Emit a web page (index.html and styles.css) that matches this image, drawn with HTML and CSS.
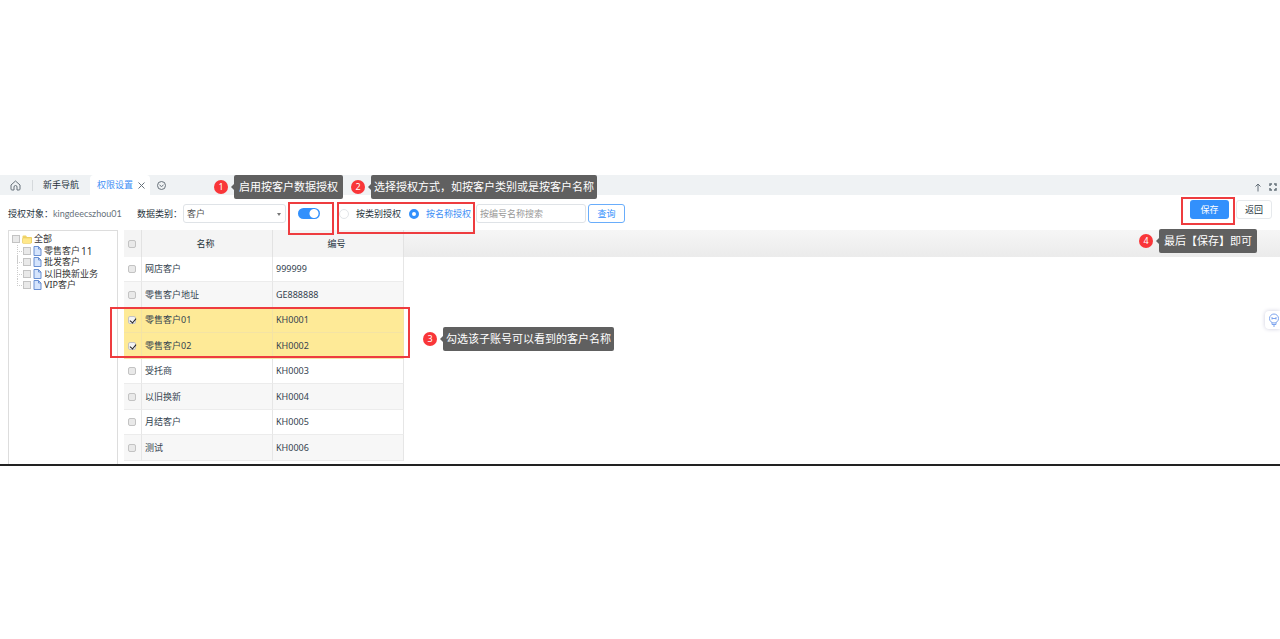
FILE: index.html
```html
<!DOCTYPE html>
<html lang="zh-CN">
<head>
<meta charset="utf-8">
<title>权限设置</title>
<link rel="stylesheet" href="styles.css">
</head>
<body>
<main class="page">
  <nav class="tabs">
    <a class="home" href="#" aria-label="首页"><svg width="11" height="11" viewBox="0 0 22 22"><path d="M2 10 11 2l9 8v8q0 2-2 2h-4v-6q0-3-3-3t-3 3v6H4q-2 0-2-2z"/></svg></a>
    <a class="tab" href="#">新手导航</a>
    <span class="tab active"><a href="#">权限设置</a><button class="close" type="button" aria-label="关闭"><svg width="7" height="7" viewBox="0 0 14 14"><path d="m1 1 12 12M13 1 1 13"/></svg></button></span>
    <button class="tab-menu" type="button" aria-label="更多"><svg width="9" height="9" viewBox="0 0 18 18"><circle cx="9" cy="9" r="8"/><path d="m5 8 4 3 4-3"/></svg></button>
    <div class="window-tools">
      <button type="button" aria-label="收起"><svg width="8" height="9" viewBox="0 0 16 18"><path d="M8 17V2M3 7l5-5 5 5"/></svg></button>
      <button type="button" aria-label="全屏"><svg width="8" height="8" viewBox="0 0 16 16"><path class="bold" d="M2 6V2h4M10 2h4v4M14 10v4h-4M6 14H2v-4"/></svg></button>
    </div>
  </nav>

  <form class="toolbar">
    <span class="caption">授权对象：</span>
    <span class="account">kingdeecszhou01</span>
    <label class="caption" for="kind">数据类别：</label>
    <span class="select"><select id="kind"><option>客户</option></select></span>
    <input class="switch" type="checkbox" checked aria-label="启用数据授权">
    <label class="radio"><input type="radio" name="mode">按类别授权</label>
    <label class="radio second"><input type="radio" name="mode" checked><span>按名称授权</span></label>
    <input class="search" type="text" placeholder="按编号名称搜索" aria-label="搜索">
    <button class="btn query" type="button">查询</button>
    <div class="actions">
      <button class="btn save" type="button">保存</button>
      <button class="btn back" type="button">返回</button>
    </div>
  </form>

  <div class="content">
    <aside class="tree">
      <label class="node root"><input class="check" type="checkbox"><svg width="10" height="9" viewBox="0 0 20 18"><path fill="#f0d468" stroke="none" d="M1 3q0-2 2-2h5l2 3h8q2 0 2 2v10H1z"/><path fill="#ffe88a" stroke="#e5c75a" stroke-width="1" d="M1 8q0-2 2-2h16v8q0 3-3 3H3q-2 0-2-2z"/></svg>全部</label>
      <label class="node"><input class="check" type="checkbox"><svg width="9" height="10" viewBox="0 0 18 20"><path class="doc" d="M2 1h9l5 5v13H2z"/><path class="fold" d="M11 1v5h5"/></svg>零售客户<span class="latin">11</span></label>
      <label class="node"><input class="check" type="checkbox"><svg width="9" height="10" viewBox="0 0 18 20"><path class="doc" d="M2 1h9l5 5v13H2z"/><path class="fold" d="M11 1v5h5"/></svg>批发客户</label>
      <label class="node"><input class="check" type="checkbox"><svg width="9" height="10" viewBox="0 0 18 20"><path class="doc" d="M2 1h9l5 5v13H2z"/><path class="fold" d="M11 1v5h5"/></svg>以旧换新业务</label>
      <label class="node last"><input class="check" type="checkbox"><svg width="9" height="10" viewBox="0 0 18 20"><path class="doc" d="M2 1h9l5 5v13H2z"/><path class="fold" d="M11 1v5h5"/></svg>VIP客户</label>
    </aside>
    <section class="grid">
      <table>
        <thead><tr><th class="pick"><input class="check" type="checkbox" aria-label="全选"></th><th>名称</th><th>编号</th></tr></thead>
        <tbody>
          <tr><td class="pick"><input class="check" type="checkbox" aria-label="网店客户"></td><td>网店客户</td><td>999999</td></tr>
          <tr><td class="pick"><input class="check" type="checkbox" aria-label="零售客户地址"></td><td>零售客户地址</td><td>GE888888</td></tr>
          <tr class="selected"><td class="pick"><input class="check" type="checkbox" checked aria-label="零售客户01"></td><td>零售客户01</td><td>KH0001</td></tr>
          <tr class="selected"><td class="pick"><input class="check" type="checkbox" checked aria-label="零售客户02"></td><td>零售客户02</td><td>KH0002</td></tr>
          <tr><td class="pick"><input class="check" type="checkbox" aria-label="受托商"></td><td>受托商</td><td>KH0003</td></tr>
          <tr><td class="pick"><input class="check" type="checkbox" aria-label="以旧换新"></td><td>以旧换新</td><td>KH0004</td></tr>
          <tr><td class="pick"><input class="check" type="checkbox" aria-label="月结客户"></td><td>月结客户</td><td>KH0005</td></tr>
          <tr><td class="pick"><input class="check" type="checkbox" aria-label="测试"></td><td>测试</td><td>KH0006</td></tr>
        </tbody>
      </table>
    </section>
  </div>

  <button class="help" type="button" aria-label="帮助"><svg width="12" height="14" viewBox="0 0 24 28"><circle cx="12" cy="11" r="9"/><path d="M8 19v4h8v-4M10 26h4M8 8v5M16 8v5M8 11h8"/></svg></button>

  <i class="frame frame-switch"></i>
  <i class="frame frame-mode"></i>
  <i class="frame frame-rows"></i>
  <i class="frame frame-save"></i>
  <div class="step step-1"><b>1</b><span>启用按客户数据授权</span></div>
  <div class="step step-2"><b>2</b><span>选择授权方式，如按客户类别或是按客户名称</span></div>
  <div class="step step-3"><b>3</b><span>勾选该子账号可以看到的客户名称</span></div>
  <div class="step step-4"><b>4</b><span>最后【保存】即可</span></div>
</main>
</body>
</html>
```

FILE: styles.css
```css
* { box-sizing: border-box; }
body {
  margin: 0;
  padding-top: 175px;
  background: #fff;
  color: #34434f;
  font: 9px/12px "Noto Sans", "Noto Sans CJK SC", sans-serif;
}
button, input, select { margin: 0; padding: 0; font: inherit; color: inherit; }
button { border: 0; background: none; }
a { color: inherit; text-decoration: none; }
svg { display: block; flex: none; fill: none; stroke: #66717a; stroke-width: 2; }

.page { position: relative; overflow: hidden; border-bottom: 2px solid #222; }

/* tab strip */
.tabs { display: flex; align-items: center; height: 20px; padding-left: 10px; background: #eff2f4; }
.home { width: 23px; height: 11px; border-right: 1px solid #d5d9dc; }
.tab { padding: 0 11px 0 10px; color: #26333c; }
.tab.active {
  display: flex; align-items: center; gap: 5px; height: 20px; padding: 0 5px 0 7px;
  border-radius: 4px 4px 0 0; background: #fff; color: #3d8ef5;
}
.tab-menu { margin-left: 7px; }
.window-tools { display: flex; align-items: center; gap: 7px; margin: 4px 3px 0 auto; }
.window-tools .bold { stroke-width: 3; }

/* filter row */
.toolbar { display: flex; align-items: center; height: 35px; padding: 2px 8px 0; white-space: nowrap; }
.caption { width: 45px; color: #26333c; }
.account { width: 84px; color: #66717a; font-family: Lato, "Noto Sans", sans-serif; }
.select { position: relative; flex: none; width: 103px; margin-left: 1px; }
.select::after {
  content: ""; position: absolute; right: 5px; top: 9px;
  border: 2px solid transparent; border-top: 3px solid #777; border-bottom: 0;
}
.select select, .search {
  width: 100%; height: 19px; padding: 0 3px; border: 1px solid #dfe3e7; border-radius: 3px;
  background: #fff; appearance: none; outline: 0; color: #555;
}
.switch {
  flex: none; width: 22px; height: 11px; margin-left: 12px; border-radius: 6px; appearance: none;
  background: radial-gradient(circle at 16px 50%, #fff 4px, #3290fc 5px);
}
.radio { display: flex; align-items: center; gap: 7px; flex: none; margin-left: 19px; color: #26333c; }
.radio input { width: 10px; height: 10px; border: 1px solid #e2e5e8; border-radius: 50%; appearance: none; background: #fff; }
.radio input:checked { border: 3px solid #3290fc; }
.radio.second { margin-left: 8px; color: #3d8ef5; }
.toolbar .search { flex: none; width: 110px; margin-left: 5px; }
.search::placeholder { color: #999; }
.btn { flex: none; height: 19px; border-radius: 3px; text-align: center; }
.query { width: 37px; margin-left: 2px; border: 1px solid #69adfb; color: #3290fc; }
.actions { display: flex; gap: 7px; margin: 0 0 8px auto; }
.save { width: 39px; background: #3290fc; color: #fff; }
.back { width: 36px; border: 1px solid #e6e9ec; color: #26333c; }

/* tree and table */
.content { display: flex; align-items: stretch; gap: 6px; height: 234px; padding-left: 8px; }
.tree { flex: none; width: 110px; padding: 2px 3px; border: 1px solid #ddd; border-bottom: 0; }
.node { position: relative; display: flex; align-items: center; gap: 2px; height: 11px; padding-left: 11px; white-space: nowrap; color: #333; }
.node:nth-child(odd) { height: 12px; }
.node.root { padding-left: 0; }
.node:not(.root)::before { content: ""; position: absolute; left: 5px; top: 0; width: 6px; height: 6px; border: dotted #ccc; border-width: 0 0 1px 1px; }
.node:not(.root):not(.last)::after { content: ""; position: absolute; left: 5px; top: 0; bottom: 0; border-left: 1px dotted #ccc; }
.node .check { border-radius: 0; }
.doc { fill: #d5e4fc; stroke: #6a90d2; }
.fold { stroke: #6a90d2; }
.latin { margin-left: -1px; font-size: 10px; }
.check {
  flex: none; display: block; width: 8px; height: 8px; border: 1px solid #c3c3c3; border-radius: 2px;
  appearance: none; background: #e9e9e9;
}
.check:checked { position: relative; background: #f3f3f3; }
.check:checked::after {
  content: ""; position: absolute; left: 2px; top: 0; width: 3px; height: 5px;
  border: solid #222; border-width: 0 1px 1px 0; transform: rotate(40deg);
}
.grid { flex: 1; background: linear-gradient(#f6f6f6, #ebebeb) top / 100% 27px no-repeat; }
table { width: 280px; border-spacing: 0; table-layout: fixed; }
th { height: 27px; padding: 0 3px 0 0; border-right: 1px solid #e2e2e2; background: #f4f4f4; font-weight: 400; color: #26333c; }
td { height: 25px; padding: 0 4px 0 3px; border-right: 1px solid #e6e6e6; border-bottom: 1px solid #ececec; background: #fff; }
tr:nth-child(even) td { height: 26px; background: #f7f7f7; }
tbody .selected td, tbody .selected:nth-child(even) td { background: #feea97; border-color: #f4e3a4; }
.pick { width: 18px; }
.pick .check { margin: 0 0 0 4px; }
td.pick { padding: 0; }

.help {
  position: absolute; right: 0; top: 136px; display: flex; align-items: center; width: 15px; height: 18px;
  padding-left: 3px; border-radius: 4px 0 0 4px; background: #fff; box-shadow: 0 0 4px #ccd;
}
.help svg { stroke: #7da4ee; }

/* guide annotations */
.frame { position: absolute; border: 2px solid #ee3c3f; }
.frame-switch { left: 288px; top: 27px; width: 46px; height: 33px; }
.frame-mode { left: 337px; top: 27px; width: 138px; height: 32px; }
.frame-rows { left: 110px; top: 132px; width: 300px; height: 51px; }
.frame-save { right: 45px; top: 22px; width: 54px; height: 28px; }
.step { position: absolute; display: flex; align-items: center; gap: 6px; font-size: 11px; color: #fff; }
.step b { width: 14px; height: 14px; border-radius: 50%; background: #f93639; font-size: 9px; font-weight: 400; line-height: 14px; text-align: center; }
.step span { position: relative; padding: 0 3px; border-radius: 2px; background: #606060; line-height: 24px; white-space: nowrap; }
.step span::before { content: ""; position: absolute; left: -3px; top: 9px; border: 3px solid transparent; border-right-color: #606060; border-left: 0; }
.step-1 { left: 214px; top: 0; }
.step-2 { left: 351px; top: 0; }
.step-3 { left: 423px; top: 152px; }
.step-4 { right: 23px; top: 54px; }
.step-1 span, .step-4 span { padding: 0 5px; }
```
